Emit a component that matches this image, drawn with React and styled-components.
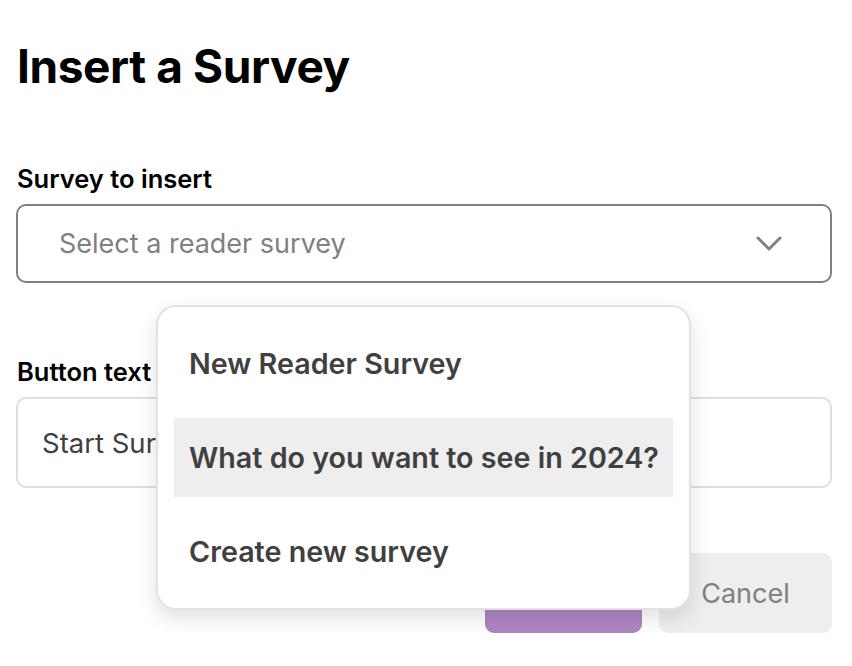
import React from 'react';
import styled, { createGlobalStyle } from 'styled-components';

const GlobalStyle = createGlobalStyle`
  body {
    margin: 0;
    background: #fff;
    font-family: Inter, "Liberation Sans", sans-serif;
  }
`;

const Page = styled.div`
  padding: 38px 20px 0 16px;
`;

const Title = styled.h1`
  margin: 0 0 0 1px;
  font-size: 46px;
  line-height: 56px;
  font-weight: 700;
  color: #000;
  letter-spacing: -0.4px;
`;

const Field = styled.div`
  position: relative;
  margin-top: ${(p) => p.$top}px;
`;

const Label = styled.label`
  display: block;
  margin: 0 0 10px 1px;
  font-size: 25.5px;
  line-height: 30px;
  font-weight: 600;
  color: #000;
`;

const Select = styled.div`
  height: 79px;
  box-sizing: border-box;
  border: 2px solid #808080;
  border-radius: 10px;
  display: flex;
  align-items: center;
  justify-content: space-between;
  padding: 0 48px 0 41px;
  font-size: 27px;
  color: #808080;
`;

const Input = styled.div`
  height: 91px;
  box-sizing: border-box;
  border: 2px solid #dedede;
  border-radius: 10px;
  display: flex;
  align-items: center;
  padding: 0 24px;
  font-size: 27.5px;
  color: #404040;
`;

const Menu = styled.div`
  position: absolute;
  top: 141px;
  left: 140px;
  width: 535px;
  height: 305px;
  box-sizing: border-box;
  padding: 17px 16px;
  display: flex;
  flex-direction: column;
  gap: 16px;
  background: #fff;
  border: 2px solid #e2e2e2;
  border-radius: 20px;
  box-shadow: 0 8px 20px rgba(0, 0, 0, 0.12);
  z-index: 10;
`;

const Item = styled.div`
  height: 79px;
  display: flex;
  align-items: center;
  padding: 0 15px;
  font-size: 28.7px;
  font-weight: 600;
  color: #404040;
  white-space: nowrap;
  background: ${(p) => (p.$active ? '#eeeeee' : 'transparent')};
`;

const Actions = styled.div`
  display: flex;
  justify-content: flex-end;
  gap: 17px;
  margin-top: 65px;
`;

const Button = styled.button`
  height: 80px;
  width: ${(p) => p.$w}px;
  border: none;
  border-radius: 9px;
  font-family: inherit;
  font-size: 27px;
  background: ${(p) => (p.$primary ? '#ae85c3' : '#eeeeee')};
  color: ${(p) => (p.$primary ? '#fff' : '#808080')};
`;

function Chevron() {
  return (
    <svg width="26" height="16" viewBox="0 0 26 16" fill="none">
      <path d="M2 2 L13 13 L24 2" stroke="#808080" strokeWidth="3" strokeLinecap="round" strokeLinejoin="round" />
    </svg>
  );
}

export default function App() {
  return (
    <Page>
      <GlobalStyle />
      <Title>Insert a Survey</Title>
      <Field $top={70}>
        <Label>Survey to insert</Label>
        <Select>
          <span>Select a reader survey</span>
          <Chevron />
        </Select>
        <Menu>
          <Item>New Reader Survey</Item>
          <Item $active>What do you want to see in 2024?</Item>
          <Item>Create new survey</Item>
        </Menu>
      </Field>
      <Field $top={74}>
        <Label>Button text</Label>
        <Input>Start Survey</Input>
      </Field>
      <Actions>
        <Button $primary $w={157}>Insert</Button>
        <Button $w={173}>Cancel</Button>
      </Actions>
    </Page>
  );
}
